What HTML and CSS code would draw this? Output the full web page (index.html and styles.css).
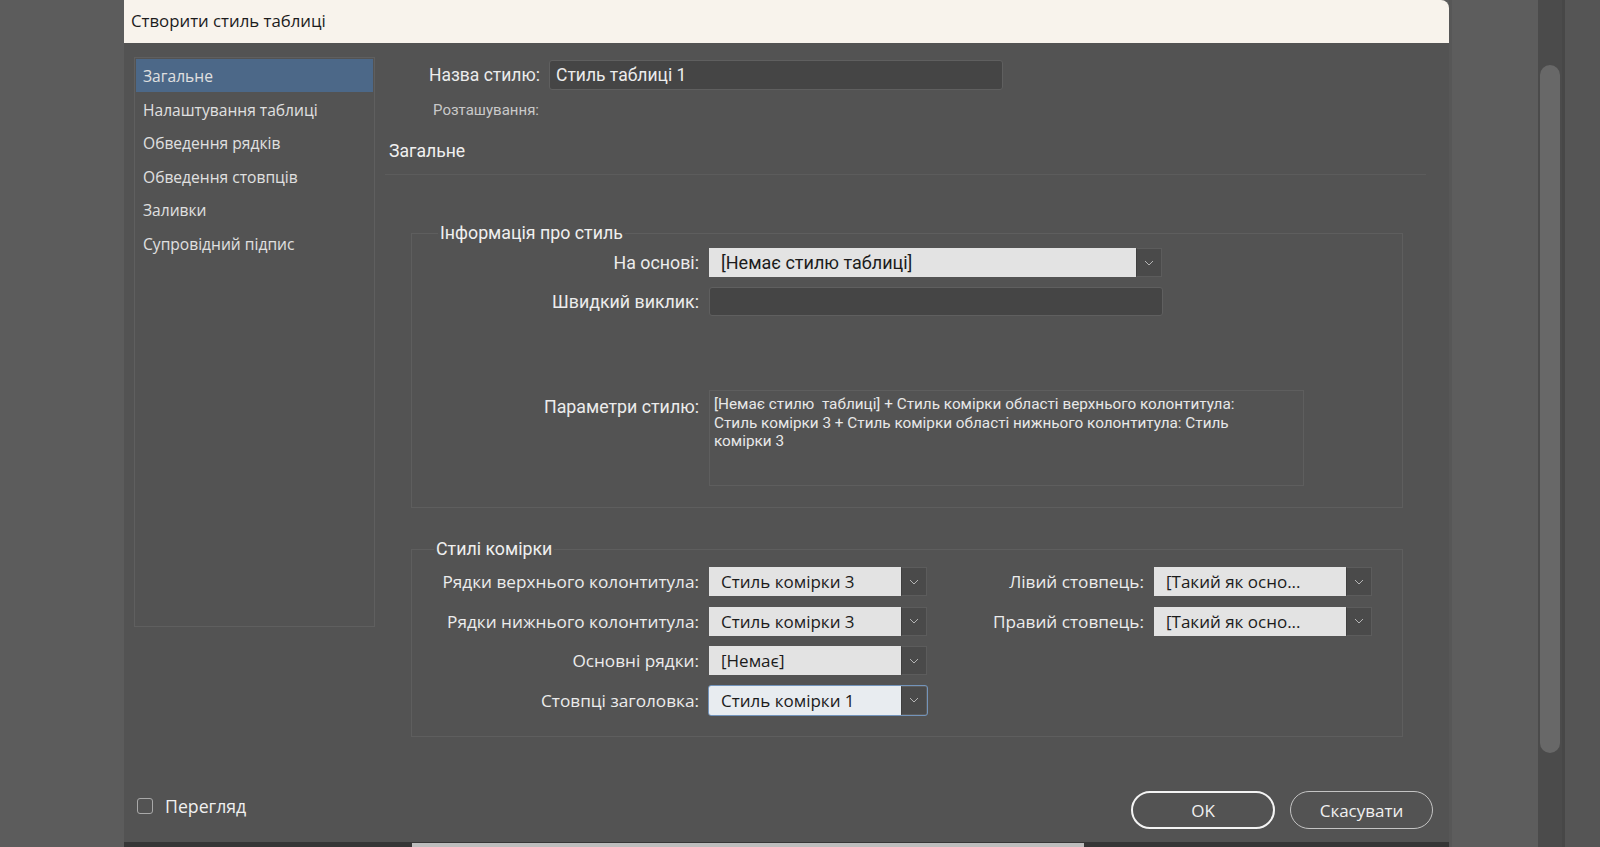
FILE: index.html
```html
<!DOCTYPE html>
<html>
<head>
  <meta charset="utf-8">
  <title>Створити стиль таблиці</title>
  <link rel="stylesheet" href="styles.css">
</head>
<body>
<div class="screen">
  <div class="desk"></div>

  <div class="dialog-col">
    <div class="dialog">
      <div class="titlebar">Створити стиль таблиці</div>

      <div class="content">
        <ul class="sidebar">
          <li class="item active">Загальне</li>
          <li class="item">Налаштування таблиці</li>
          <li class="item">Обведення рядків</li>
          <li class="item">Обведення стовпців</li>
          <li class="item">Заливки</li>
          <li class="item">Супровідний підпис</li>
        </ul>

        <div class="main">
          <div class="name-row">
            <span class="name-label">Назва стилю:</span>
            <div class="text-input name-input">Стиль таблиці 1</div>
          </div>
          <div class="loc-row">Розташування:</div>
          <div class="section-title">Загальне</div>

          <fieldset class="group info">
            <legend>Інформація про стиль</legend>
            <div class="info-grid">
              <span class="lbl">На основі:</span>
              <div class="select based">
                <span class="val cond">[Немає стилю таблиці]</span>
                <span class="arrow"><svg width="10" height="6" viewBox="0 0 10 6"><polyline points="1,1 5,5 9,1" fill="none" stroke="#b4b4b4" stroke-width="1"/></svg></span>
              </div>
              <span class="lbl">Швидкий виклик:</span>
              <div class="text-input shortcut"></div>
              <span class="lbl params-lbl">Параметри стилю:</span>
              <div class="params">[Немає стилю&nbsp; таблиці] + Стиль комірки області верхнього колонтитула:<br>Стиль комірки 3 + Стиль комірки області нижнього колонтитула: Стиль<br>комірки 3</div>
            </div>
          </fieldset>

          <fieldset class="group cells">
            <legend>Стилі комірки</legend>
            <div class="cell-grid">
              <span class="lbl2">Рядки верхнього колонтитула:</span>
              <div class="select small">
                <span class="val">Стиль комірки 3</span>
                <span class="arrow"><svg width="10" height="6" viewBox="0 0 10 6"><polyline points="1,1 5,5 9,1" fill="none" stroke="#b4b4b4" stroke-width="1"/></svg></span>
              </div>
              <span class="lbl2">Лівий стовпець:</span>
              <div class="select small">
                <span class="val">[Такий як осно...</span>
                <span class="arrow"><svg width="10" height="6" viewBox="0 0 10 6"><polyline points="1,1 5,5 9,1" fill="none" stroke="#b4b4b4" stroke-width="1"/></svg></span>
              </div>

              <span class="lbl2">Рядки нижнього колонтитула:</span>
              <div class="select small">
                <span class="val">Стиль комірки 3</span>
                <span class="arrow"><svg width="10" height="6" viewBox="0 0 10 6"><polyline points="1,1 5,5 9,1" fill="none" stroke="#b4b4b4" stroke-width="1"/></svg></span>
              </div>
              <span class="lbl2">Правий стовпець:</span>
              <div class="select small">
                <span class="val">[Такий як осно...</span>
                <span class="arrow"><svg width="10" height="6" viewBox="0 0 10 6"><polyline points="1,1 5,5 9,1" fill="none" stroke="#b4b4b4" stroke-width="1"/></svg></span>
              </div>

              <span class="lbl2">Основні рядки:</span>
              <div class="select small">
                <span class="val">[Немає]</span>
                <span class="arrow"><svg width="10" height="6" viewBox="0 0 10 6"><polyline points="1,1 5,5 9,1" fill="none" stroke="#b4b4b4" stroke-width="1"/></svg></span>
              </div>
              <span></span>
              <span></span>

              <span class="lbl2">Стовпці заголовка:</span>
              <div class="select small focused">
                <span class="val">Стиль комірки 1</span>
                <span class="arrow"><svg width="10" height="6" viewBox="0 0 10 6"><polyline points="1,1 5,5 9,1" fill="none" stroke="#b4b4b4" stroke-width="1"/></svg></span>
              </div>
            </div>
          </fieldset>
        </div>
      </div>

      <div class="footer">
        <label class="preview">
          <span class="checkbox"></span>
          <span>Перегляд</span>
        </label>
        <div class="buttons">
          <button class="btn primary">OK</button>
          <button class="btn">Скасувати</button>
        </div>
      </div>
    </div>
    <div class="taskbar"><div class="taskbar-item"></div></div>
  </div>

  <div class="gutter"></div>
  <div class="scroll-track"><div class="scroll-thumb"></div></div>
  <div class="edge"></div>
  <div class="far"></div>
</div>
</body>
</html>
```

FILE: styles.css
```css
* {
  box-sizing: border-box;
}

body {
  margin: 0;
  height: 847px;
  overflow: hidden;
  background: #5c5c5c;
  font-family: "Open Sans", "Noto Sans", sans-serif;
  color: #e8e8e8;
}

.screen {
  display: flex;
  height: 847px;
}

.desk {
  width: 124px;
  background: #5c5c5c;
}

.dialog-col {
  width: 1325px;
  display: flex;
  flex-direction: column;
}

.dialog {
  height: 842px;
  background: #535353;
  border-top-right-radius: 8px;
  display: flex;
  flex-direction: column;
}

.titlebar {
  height: 43px;
  background: #f8f3ec;
  color: #1c1c1c;
  font-size: 16.8px;
  display: flex;
  align-items: center;
  padding-left: 7px;
  padding-bottom: 2px;
  border-top-right-radius: 8px;
}

.content {
  display: flex;
  align-items: flex-start;
  gap: 10px;
  padding: 14px 0 0 10px;
}

/* left list */
.sidebar {
  list-style: none;
  margin: 0;
  padding: 1px;
  width: 241px;
  height: 570px;
  border: 1px solid #5f5f5f;
}

.item {
  height: 33.5px;
  line-height: 34px;
  padding-left: 7px;
  font-size: 15.6px;
  color: #e0e0e0;
}

.item.active {
  background: #4c6888;
  height: 33px;
  margin-bottom: 0.5px;
}

/* right side */
.main {
  width: 1041px;
}

.name-row {
  display: flex;
  align-items: center;
  margin-top: 3px;
  height: 30px;
}

.name-label {
  width: 155px;
  text-align: right;
  font-family: Roboto, sans-serif;
  font-size: 17.5px;
  color: #ececec;
  margin-right: 9px;
}

.text-input {
  height: 29px;
  background: #454545;
  border: 1px solid #5f5f5f;
  border-radius: 3px;
  color: #ececec;
  font-family: Roboto, sans-serif;
  font-size: 17.5px;
  line-height: 27px;
  padding-left: 6px;
}

.name-input {
  width: 454px;
  height: 30px;
  line-height: 28px;
}

.loc-row {
  margin-top: 10px;
  width: 154px;
  text-align: right;
  line-height: 20px;
  font-family: Roboto, sans-serif;
  font-size: 15px;
  color: #c9c9c9;
}

.section-title {
  margin-top: 20px;
  line-height: 22px;
  padding: 0 0 12px 4px;
  font-family: Roboto, sans-serif;
  font-size: 17.6px;
  color: #f0f0f0;
  border-bottom: 1px solid #5c5c5c;
}

.group {
  margin: 0 23px 0 26px;
  border: 1px solid #5e5e5e;
  padding: 0;
  min-width: 0;
}

.group legend {
  margin-left: 26px;
  padding: 0 2px;
  line-height: 20px;
  font-family: Roboto, sans-serif;
  font-size: 17.8px;
  color: #efefef;
}

.info {
  margin-top: 48px;
  padding: 5px 0 21px 0;
}

.cells legend {
  margin-left: 22px;
}

.info-grid {
  display: grid;
  grid-template-columns: 287px 1fr;
  column-gap: 10px;
  row-gap: 9.5px;
  align-items: center;
}

.lbl {
  text-align: right;
  font-family: Roboto, sans-serif;
  font-size: 17.8px;
  color: #ececec;
}

.params-lbl {
  align-self: start;
  margin-top: 66px;
  padding-top: 5px;
}

.select {
  height: 29px;
  display: flex;
  border-radius: 2px;
}

.select .val {
  flex: 1;
  background: #e3e3e3;
  color: #1b1b1b;
  font-size: 17px;
  line-height: 29px;
  padding-left: 12px;
  white-space: nowrap;
  overflow: hidden;
}

.select .val.cond {
  font-family: Roboto, sans-serif;
  font-size: 18px;
}

.select .arrow {
  width: 26px;
  background: #4a4a4a;
  border: 1px solid #5c5c5c;
  border-left: 1px solid #3f3f3f;
  display: flex;
  align-items: center;
  justify-content: center;
}

.based {
  width: 453px;
}

.shortcut {
  width: 454px;
}

.params {
  margin-top: 65px;
  width: 595px;
  height: 96px;
  border: 1px solid #5e5e5e;
  padding: 4px 4px;
  font-family: Roboto, sans-serif;
  font-size: 15.3px;
  line-height: 18.5px;
  color: #e8e8e8;
}

.cells {
  margin-top: 31px;
  padding: 8px 0 21px 0;
}

.cell-grid {
  display: grid;
  grid-template-columns: 287px 218px 207px 218px;
  column-gap: 10px;
  row-gap: 10.5px;
  align-items: center;
}

.lbl2 {
  text-align: right;
  font-size: 17.2px;
  color: #ececec;
  white-space: nowrap;
}

.small {
  width: 218px;
}

.select.focused {
  outline: 1px solid #7394bb;
}

.select.focused .val {
  background: #e8ecf0;
}

/* bottom bar */
.footer {
  margin-top: auto;
  display: flex;
  align-items: center;
  justify-content: space-between;
  padding: 0 16px 13px 13px;
}

.preview {
  display: flex;
  align-items: center;
  gap: 12px;
  margin-bottom: 8px;
  font-size: 17.7px;
  color: #f0f0f0;
}

.checkbox {
  width: 16px;
  height: 16px;
  border: 1.5px solid #a9a9a9;
  border-radius: 3px;
}

.buttons {
  display: flex;
  gap: 15px;
}

.btn {
  width: 143px;
  height: 38px;
  border-radius: 19px;
  background: transparent;
  border: 1px solid #c4c4c4;
  color: #f0f0f0;
  font-family: "Open Sans", sans-serif;
  font-size: 17px;
}

.btn.primary {
  width: 144px;
  border: 2px solid #f4f4f4;
}

.taskbar {
  height: 5px;
  background: #363636;
  padding: 1px 0 0 288px;
}

.taskbar-item {
  width: 672px;
  height: 4px;
  background: #bdbdbd;
}

/* right side of the screen */
.gutter {
  width: 89px;
  background: #5d5d5d;
  border-left: 3px solid #575757;
}

.scroll-track {
  width: 24px;
  background: #4b4b4b;
  padding: 65px 2px 0 2px;
}

.scroll-thumb {
  height: 688px;
  background: #686868;
  border-radius: 10px;
}

.edge {
  width: 3px;
  background: #474747;
}

.far {
  flex: 1;
  background: #555555;
}
```
